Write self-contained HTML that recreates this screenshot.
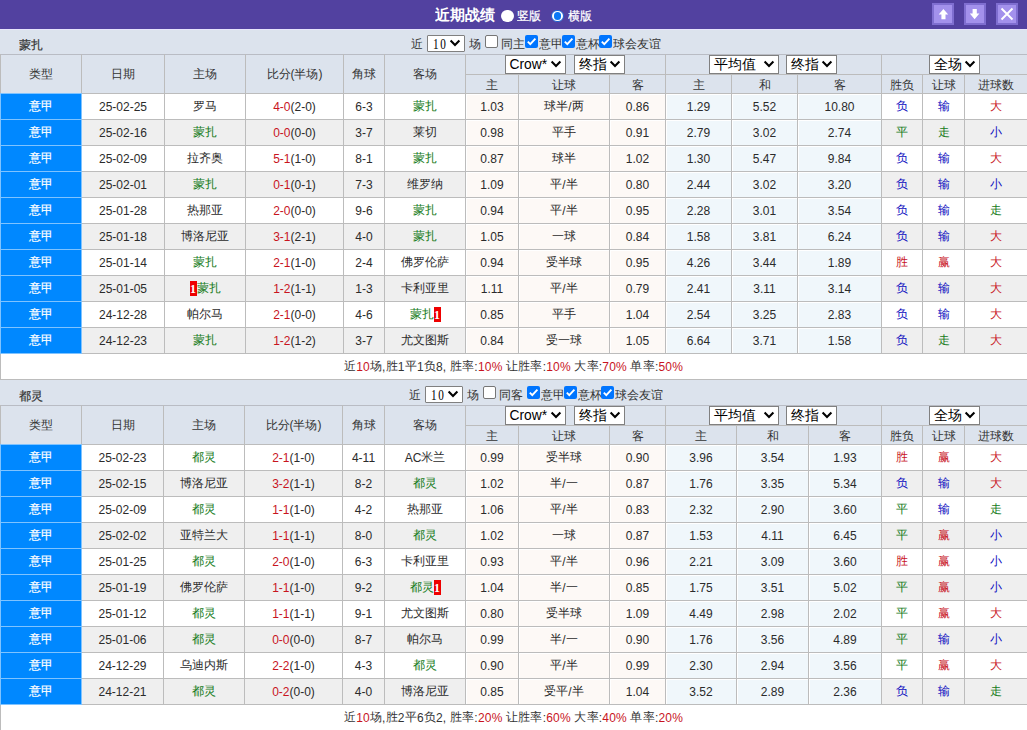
<!DOCTYPE html>
<html><head><meta charset="utf-8"><style>
html,body{margin:0;padding:0;background:#fff;width:1027px;height:730px;overflow:hidden;position:relative}
body{font-family:"Liberation Sans",sans-serif;font-size:12px;color:#333}
div{position:absolute;box-sizing:border-box}
.tx{white-space:nowrap;overflow:hidden}
.bd{display:inline-block;background:#e00;color:#fff;font-weight:bold;font-family:"Liberation Serif",serif;width:7px;height:15px;line-height:15px;text-align:center;vertical-align:middle;font-size:12px}
.sel{background:#fff;border:1px solid #808080;font-size:13.33px;color:#000;line-height:17px;white-space:nowrap}
.sel span{position:absolute;left:4px;top:0}
.n{position:relative;top:1px}
</style></head><body>
<div style="left:0px;top:0px;width:1027px;height:29px;background:#5241a0"></div>
<div style="left:0px;top:29px;width:1027px;height:1px;background:#e6e4fc"></div>
<div class="tx" style="left:435px;top:0px;width:70px;height:29px;line-height:29px;font-size:15px;font-weight:bold;color:#fff">近期战绩</div>
<div style="left:501px;top:9.5px;width:12.5px;height:12.5px;border-radius:50%;background:#fff"></div>
<div class="tx" style="left:517px;top:2px;width:30px;height:29px;line-height:29px;color:#fff;-webkit-text-stroke:0.25px #fff">竖版</div>
<div style="left:551px;top:9.5px;width:12.5px;height:12.5px;border-radius:50%;background:#fff;border:1px solid #1c5fd0"><div style="left:1.5px;top:1.5px;width:7.5px;height:7.5px;border-radius:50%;background:#0a78f5"></div></div>
<div class="tx" style="left:568px;top:2px;width:30px;height:29px;line-height:29px;color:#fff;-webkit-text-stroke:0.25px #fff">横版</div>
<div style="left:932px;top:3px;width:22px;height:22px;background:#a391ec;border:2px solid #7f6ed0"><svg width="22" height="22" viewBox="0 0 22 22" style="position:absolute;left:-2px;top:-2px"><path d="M11.4 5.9 L16.2 11.6 L13.5 11.6 L13.5 16.3 L9.4 16.3 L9.4 11.6 L6.7 11.6 Z" fill="#fff"/></svg></div>
<div style="left:964px;top:3px;width:22px;height:22px;background:#a391ec;border:2px solid #7f6ed0"><svg width="22" height="22" viewBox="0 0 22 22" style="position:absolute;left:-2px;top:-2px"><path d="M10.6 16.3 L15.4 10.5 L12.8 10.5 L12.8 5.9 L8.6 5.9 L8.6 10.5 L5.8 10.5 Z" fill="#fff"/></svg></div>
<div style="left:996px;top:3px;width:22px;height:22px;background:#a391ec;border:2px solid #7f6ed0"><svg width="22" height="22" viewBox="0 0 22 22" style="position:absolute;left:-2px;top:-2px"><path d="M5.5 5.5 L16.5 16.5 M16.5 5.5 L5.5 16.5" stroke="#fff" stroke-width="1.9"/></svg></div>
<div style="left:0px;top:30px;width:1027px;height:24px;background:#dce3ed"></div>
<div class="tx" style="left:19px;top:33px;width:40px;height:24px;line-height:24px;color:#333;-webkit-text-stroke:0.2px #333">蒙扎</div>
<div class="tx" style="left:411px;top:32px;width:14px;height:24px;line-height:24px;color:#333">近</div>
<div class="sel" style="left:427px;top:35px;width:38px;height:17px;font-family:&quot;Liberation Serif&quot;,serif;font-size:14px;line-height:15px;border-radius:1px"><span style="left:4.5px;top:1px;letter-spacing:2.2px;transform:scaleX(0.8);transform-origin:0 0">10</span><svg width="12" height="8" viewBox="0 0 12 8" style="position:absolute;left:21px;top:3px"><path d="M1.6 1.6 L6 6 L10.4 1.6" fill="none" stroke="#000" stroke-width="2.1"/></svg></div>
<div class="tx" style="left:469px;top:32px;width:14px;height:24px;line-height:24px;color:#333">场</div>
<div style="left:485px;top:35px;width:13px;height:13px;background:#fff;border:1px solid #767676;border-radius:2px"></div>
<div class="tx" style="left:501px;top:32px;width:30px;height:24px;line-height:24px;color:#333">同主</div>
<div style="left:525px;top:35px;width:13px;height:13px;background:#0075ff;border-radius:2px"><svg width="13" height="13" viewBox="0 0 13 13" style="position:absolute;left:0;top:0"><path d="M2.8 6.6 L5.3 9.1 L10.4 3.6" fill="none" stroke="#fff" stroke-width="1.9"/></svg></div>
<div class="tx" style="left:539px;top:32px;width:30px;height:24px;line-height:24px;color:#333">意甲</div>
<div style="left:562px;top:35px;width:13px;height:13px;background:#0075ff;border-radius:2px"><svg width="13" height="13" viewBox="0 0 13 13" style="position:absolute;left:0;top:0"><path d="M2.8 6.6 L5.3 9.1 L10.4 3.6" fill="none" stroke="#fff" stroke-width="1.9"/></svg></div>
<div class="tx" style="left:576px;top:32px;width:30px;height:24px;line-height:24px;color:#333">意杯</div>
<div style="left:599px;top:35px;width:13px;height:13px;background:#0075ff;border-radius:2px"><svg width="13" height="13" viewBox="0 0 13 13" style="position:absolute;left:0;top:0"><path d="M2.8 6.6 L5.3 9.1 L10.4 3.6" fill="none" stroke="#fff" stroke-width="1.9"/></svg></div>
<div class="tx" style="left:613px;top:32px;width:60px;height:24px;line-height:24px;color:#333">球会友谊</div>
<div style="left:0px;top:55px;width:1027px;height:38px;background:#dce3ed"></div>
<div style="left:0px;top:94px;width:1027px;height:25px;background:#ffffff"></div>
<div style="left:466px;top:94px;width:199px;height:25px;background:#fff"></div>
<div style="left:666px;top:94px;width:215px;height:25px;background:#fff"></div>
<div style="left:467px;top:95px;width:51px;height:24px;background:#fdf9f6"></div>
<div style="left:520px;top:95px;width:89px;height:24px;background:#fdf9f6"></div>
<div style="left:611px;top:95px;width:54px;height:24px;background:#fdf9f6"></div>
<div style="left:667px;top:95px;width:64px;height:24px;background:#f0f7fb"></div>
<div style="left:733px;top:95px;width:64px;height:24px;background:#f0f7fb"></div>
<div style="left:799px;top:95px;width:82px;height:24px;background:#f0f7fb"></div>
<div style="left:0px;top:93px;width:82px;height:27px;background:#0088ff;box-shadow:inset 0 0 0 1px #7fc3ff"></div>
<div style="left:0px;top:120px;width:1027px;height:25px;background:#efefef"></div>
<div style="left:466px;top:120px;width:199px;height:25px;background:#fff"></div>
<div style="left:666px;top:120px;width:215px;height:25px;background:#fff"></div>
<div style="left:467px;top:121px;width:51px;height:24px;background:#fdf9f6"></div>
<div style="left:520px;top:121px;width:89px;height:24px;background:#fdf9f6"></div>
<div style="left:611px;top:121px;width:54px;height:24px;background:#fdf9f6"></div>
<div style="left:667px;top:121px;width:64px;height:24px;background:#f0f7fb"></div>
<div style="left:733px;top:121px;width:64px;height:24px;background:#f0f7fb"></div>
<div style="left:799px;top:121px;width:82px;height:24px;background:#f0f7fb"></div>
<div style="left:0px;top:119px;width:82px;height:27px;background:#0088ff;box-shadow:inset 0 0 0 1px #7fc3ff"></div>
<div style="left:0px;top:146px;width:1027px;height:25px;background:#ffffff"></div>
<div style="left:466px;top:146px;width:199px;height:25px;background:#fff"></div>
<div style="left:666px;top:146px;width:215px;height:25px;background:#fff"></div>
<div style="left:467px;top:147px;width:51px;height:24px;background:#fdf9f6"></div>
<div style="left:520px;top:147px;width:89px;height:24px;background:#fdf9f6"></div>
<div style="left:611px;top:147px;width:54px;height:24px;background:#fdf9f6"></div>
<div style="left:667px;top:147px;width:64px;height:24px;background:#f0f7fb"></div>
<div style="left:733px;top:147px;width:64px;height:24px;background:#f0f7fb"></div>
<div style="left:799px;top:147px;width:82px;height:24px;background:#f0f7fb"></div>
<div style="left:0px;top:145px;width:82px;height:27px;background:#0088ff;box-shadow:inset 0 0 0 1px #7fc3ff"></div>
<div style="left:0px;top:172px;width:1027px;height:25px;background:#efefef"></div>
<div style="left:466px;top:172px;width:199px;height:25px;background:#fff"></div>
<div style="left:666px;top:172px;width:215px;height:25px;background:#fff"></div>
<div style="left:467px;top:173px;width:51px;height:24px;background:#fdf9f6"></div>
<div style="left:520px;top:173px;width:89px;height:24px;background:#fdf9f6"></div>
<div style="left:611px;top:173px;width:54px;height:24px;background:#fdf9f6"></div>
<div style="left:667px;top:173px;width:64px;height:24px;background:#f0f7fb"></div>
<div style="left:733px;top:173px;width:64px;height:24px;background:#f0f7fb"></div>
<div style="left:799px;top:173px;width:82px;height:24px;background:#f0f7fb"></div>
<div style="left:0px;top:171px;width:82px;height:27px;background:#0088ff;box-shadow:inset 0 0 0 1px #7fc3ff"></div>
<div style="left:0px;top:198px;width:1027px;height:25px;background:#ffffff"></div>
<div style="left:466px;top:198px;width:199px;height:25px;background:#fff"></div>
<div style="left:666px;top:198px;width:215px;height:25px;background:#fff"></div>
<div style="left:467px;top:199px;width:51px;height:24px;background:#fdf9f6"></div>
<div style="left:520px;top:199px;width:89px;height:24px;background:#fdf9f6"></div>
<div style="left:611px;top:199px;width:54px;height:24px;background:#fdf9f6"></div>
<div style="left:667px;top:199px;width:64px;height:24px;background:#f0f7fb"></div>
<div style="left:733px;top:199px;width:64px;height:24px;background:#f0f7fb"></div>
<div style="left:799px;top:199px;width:82px;height:24px;background:#f0f7fb"></div>
<div style="left:0px;top:197px;width:82px;height:27px;background:#0088ff;box-shadow:inset 0 0 0 1px #7fc3ff"></div>
<div style="left:0px;top:224px;width:1027px;height:25px;background:#efefef"></div>
<div style="left:466px;top:224px;width:199px;height:25px;background:#fff"></div>
<div style="left:666px;top:224px;width:215px;height:25px;background:#fff"></div>
<div style="left:467px;top:225px;width:51px;height:24px;background:#fdf9f6"></div>
<div style="left:520px;top:225px;width:89px;height:24px;background:#fdf9f6"></div>
<div style="left:611px;top:225px;width:54px;height:24px;background:#fdf9f6"></div>
<div style="left:667px;top:225px;width:64px;height:24px;background:#f0f7fb"></div>
<div style="left:733px;top:225px;width:64px;height:24px;background:#f0f7fb"></div>
<div style="left:799px;top:225px;width:82px;height:24px;background:#f0f7fb"></div>
<div style="left:0px;top:223px;width:82px;height:27px;background:#0088ff;box-shadow:inset 0 0 0 1px #7fc3ff"></div>
<div style="left:0px;top:250px;width:1027px;height:25px;background:#ffffff"></div>
<div style="left:466px;top:250px;width:199px;height:25px;background:#fff"></div>
<div style="left:666px;top:250px;width:215px;height:25px;background:#fff"></div>
<div style="left:467px;top:251px;width:51px;height:24px;background:#fdf9f6"></div>
<div style="left:520px;top:251px;width:89px;height:24px;background:#fdf9f6"></div>
<div style="left:611px;top:251px;width:54px;height:24px;background:#fdf9f6"></div>
<div style="left:667px;top:251px;width:64px;height:24px;background:#f0f7fb"></div>
<div style="left:733px;top:251px;width:64px;height:24px;background:#f0f7fb"></div>
<div style="left:799px;top:251px;width:82px;height:24px;background:#f0f7fb"></div>
<div style="left:0px;top:249px;width:82px;height:27px;background:#0088ff;box-shadow:inset 0 0 0 1px #7fc3ff"></div>
<div style="left:0px;top:276px;width:1027px;height:25px;background:#efefef"></div>
<div style="left:466px;top:276px;width:199px;height:25px;background:#fff"></div>
<div style="left:666px;top:276px;width:215px;height:25px;background:#fff"></div>
<div style="left:467px;top:277px;width:51px;height:24px;background:#fdf9f6"></div>
<div style="left:520px;top:277px;width:89px;height:24px;background:#fdf9f6"></div>
<div style="left:611px;top:277px;width:54px;height:24px;background:#fdf9f6"></div>
<div style="left:667px;top:277px;width:64px;height:24px;background:#f0f7fb"></div>
<div style="left:733px;top:277px;width:64px;height:24px;background:#f0f7fb"></div>
<div style="left:799px;top:277px;width:82px;height:24px;background:#f0f7fb"></div>
<div style="left:0px;top:275px;width:82px;height:27px;background:#0088ff;box-shadow:inset 0 0 0 1px #7fc3ff"></div>
<div style="left:0px;top:302px;width:1027px;height:25px;background:#ffffff"></div>
<div style="left:466px;top:302px;width:199px;height:25px;background:#fff"></div>
<div style="left:666px;top:302px;width:215px;height:25px;background:#fff"></div>
<div style="left:467px;top:303px;width:51px;height:24px;background:#fdf9f6"></div>
<div style="left:520px;top:303px;width:89px;height:24px;background:#fdf9f6"></div>
<div style="left:611px;top:303px;width:54px;height:24px;background:#fdf9f6"></div>
<div style="left:667px;top:303px;width:64px;height:24px;background:#f0f7fb"></div>
<div style="left:733px;top:303px;width:64px;height:24px;background:#f0f7fb"></div>
<div style="left:799px;top:303px;width:82px;height:24px;background:#f0f7fb"></div>
<div style="left:0px;top:301px;width:82px;height:27px;background:#0088ff;box-shadow:inset 0 0 0 1px #7fc3ff"></div>
<div style="left:0px;top:328px;width:1027px;height:25px;background:#efefef"></div>
<div style="left:466px;top:328px;width:199px;height:25px;background:#fff"></div>
<div style="left:666px;top:328px;width:215px;height:25px;background:#fff"></div>
<div style="left:467px;top:329px;width:51px;height:24px;background:#fdf9f6"></div>
<div style="left:520px;top:329px;width:89px;height:24px;background:#fdf9f6"></div>
<div style="left:611px;top:329px;width:54px;height:24px;background:#fdf9f6"></div>
<div style="left:667px;top:329px;width:64px;height:24px;background:#f0f7fb"></div>
<div style="left:733px;top:329px;width:64px;height:24px;background:#f0f7fb"></div>
<div style="left:799px;top:329px;width:82px;height:24px;background:#f0f7fb"></div>
<div style="left:0px;top:327px;width:82px;height:27px;background:#0088ff;box-shadow:inset 0 0 0 1px #7fc3ff"></div>
<div style="left:0px;top:354px;width:1027px;height:25px;background:#fff"></div>
<div style="left:0px;top:54px;width:1027px;height:1px;background:#b9bcc4"></div>
<div style="left:0px;top:93px;width:1027px;height:1px;background:#bcbcbc"></div>
<div style="left:465px;top:74px;width:562px;height:1px;background:#bcbcbc"></div>
<div style="left:82px;top:119px;width:945px;height:1px;background:#bcbcbc"></div>
<div style="left:82px;top:145px;width:945px;height:1px;background:#bcbcbc"></div>
<div style="left:82px;top:171px;width:945px;height:1px;background:#bcbcbc"></div>
<div style="left:82px;top:197px;width:945px;height:1px;background:#bcbcbc"></div>
<div style="left:82px;top:223px;width:945px;height:1px;background:#bcbcbc"></div>
<div style="left:82px;top:249px;width:945px;height:1px;background:#bcbcbc"></div>
<div style="left:82px;top:275px;width:945px;height:1px;background:#bcbcbc"></div>
<div style="left:82px;top:301px;width:945px;height:1px;background:#bcbcbc"></div>
<div style="left:82px;top:327px;width:945px;height:1px;background:#bcbcbc"></div>
<div style="left:82px;top:353px;width:945px;height:1px;background:#bcbcbc"></div>
<div style="left:0px;top:379px;width:1027px;height:1px;background:#bcbcbc"></div>
<div style="left:0px;top:54px;width:1px;height:326px;background:#bcbcbc"></div>
<div style="left:81px;top:54px;width:1px;height:300px;background:#bcbcbc"></div>
<div style="left:164px;top:54px;width:1px;height:300px;background:#bcbcbc"></div>
<div style="left:245px;top:54px;width:1px;height:300px;background:#bcbcbc"></div>
<div style="left:343px;top:54px;width:1px;height:300px;background:#bcbcbc"></div>
<div style="left:384px;top:54px;width:1px;height:300px;background:#bcbcbc"></div>
<div style="left:465px;top:54px;width:1px;height:300px;background:#bcbcbc"></div>
<div style="left:518px;top:74px;width:1px;height:280px;background:#bcbcbc"></div>
<div style="left:609px;top:74px;width:1px;height:280px;background:#bcbcbc"></div>
<div style="left:665px;top:54px;width:1px;height:300px;background:#bcbcbc"></div>
<div style="left:731px;top:74px;width:1px;height:280px;background:#bcbcbc"></div>
<div style="left:797px;top:74px;width:1px;height:280px;background:#bcbcbc"></div>
<div style="left:881px;top:54px;width:1px;height:300px;background:#bcbcbc"></div>
<div style="left:922px;top:74px;width:1px;height:280px;background:#bcbcbc"></div>
<div style="left:964px;top:74px;width:1px;height:280px;background:#bcbcbc"></div>
<div style="left:0px;top:93px;width:82px;height:27px;background:#0088ff;box-shadow:inset 0 0 0 1px #7fc3ff"></div>
<div style="left:0px;top:119px;width:82px;height:27px;background:#0088ff;box-shadow:inset 0 0 0 1px #7fc3ff"></div>
<div style="left:0px;top:145px;width:82px;height:27px;background:#0088ff;box-shadow:inset 0 0 0 1px #7fc3ff"></div>
<div style="left:0px;top:171px;width:82px;height:27px;background:#0088ff;box-shadow:inset 0 0 0 1px #7fc3ff"></div>
<div style="left:0px;top:197px;width:82px;height:27px;background:#0088ff;box-shadow:inset 0 0 0 1px #7fc3ff"></div>
<div style="left:0px;top:223px;width:82px;height:27px;background:#0088ff;box-shadow:inset 0 0 0 1px #7fc3ff"></div>
<div style="left:0px;top:249px;width:82px;height:27px;background:#0088ff;box-shadow:inset 0 0 0 1px #7fc3ff"></div>
<div style="left:0px;top:275px;width:82px;height:27px;background:#0088ff;box-shadow:inset 0 0 0 1px #7fc3ff"></div>
<div style="left:0px;top:301px;width:82px;height:27px;background:#0088ff;box-shadow:inset 0 0 0 1px #7fc3ff"></div>
<div style="left:0px;top:327px;width:82px;height:27px;background:#0088ff;box-shadow:inset 0 0 0 1px #7fc3ff"></div>
<div class="tx" style="left:1px;top:55px;width:80px;height:38px;line-height:38px;text-align:center;color:#333">类型</div>
<div class="tx" style="left:82px;top:55px;width:82px;height:38px;line-height:38px;text-align:center;color:#333">日期</div>
<div class="tx" style="left:165px;top:55px;width:80px;height:38px;line-height:38px;text-align:center;color:#333">主场</div>
<div class="tx" style="left:246px;top:55px;width:97px;height:38px;line-height:38px;text-align:center;color:#333">比分(半场)</div>
<div class="tx" style="left:344px;top:55px;width:40px;height:38px;line-height:38px;text-align:center;color:#333">角球</div>
<div class="tx" style="left:385px;top:55px;width:80px;height:38px;line-height:38px;text-align:center;color:#333">客场</div>
<div class="tx" style="left:466px;top:76px;width:52px;height:18px;line-height:18px;text-align:center;color:#333">主</div>
<div class="tx" style="left:519px;top:76px;width:90px;height:18px;line-height:18px;text-align:center;color:#333">让球</div>
<div class="tx" style="left:610px;top:76px;width:55px;height:18px;line-height:18px;text-align:center;color:#333">客</div>
<div class="tx" style="left:666px;top:76px;width:65px;height:18px;line-height:18px;text-align:center;color:#333">主</div>
<div class="tx" style="left:732px;top:76px;width:65px;height:18px;line-height:18px;text-align:center;color:#333">和</div>
<div class="tx" style="left:798px;top:76px;width:83px;height:18px;line-height:18px;text-align:center;color:#333">客</div>
<div class="tx" style="left:882px;top:76px;width:40px;height:18px;line-height:18px;text-align:center;color:#333">胜负</div>
<div class="tx" style="left:923px;top:76px;width:41px;height:18px;line-height:18px;text-align:center;color:#333">让球</div>
<div class="tx" style="left:965px;top:76px;width:62px;height:18px;line-height:18px;text-align:center;color:#333">进球数</div>
<div class="sel" style="left:505px;top:55px;width:61px;height:19px"><span style="font-size:13.8px;left:3.5px">Crow*</span><svg width="12" height="8" viewBox="0 0 12 8" style="position:absolute;left:44px;top:4px"><path d="M1.6 1.6 L6 6 L10.4 1.6" fill="none" stroke="#000" stroke-width="2.1"/></svg></div>
<div class="sel" style="left:574px;top:55px;width:51px;height:19px"><span style="font-size:14px;left:3.5px">终指</span><svg width="12" height="8" viewBox="0 0 12 8" style="position:absolute;left:34px;top:4px"><path d="M1.6 1.6 L6 6 L10.4 1.6" fill="none" stroke="#000" stroke-width="2.1"/></svg></div>
<div class="sel" style="left:709px;top:55px;width:70px;height:19px"><span style="font-size:14px;left:3.5px">平均值</span><svg width="12" height="8" viewBox="0 0 12 8" style="position:absolute;left:53px;top:4px"><path d="M1.6 1.6 L6 6 L10.4 1.6" fill="none" stroke="#000" stroke-width="2.1"/></svg></div>
<div class="sel" style="left:786px;top:55px;width:51px;height:19px"><span style="font-size:14px;left:3.5px">终指</span><svg width="12" height="8" viewBox="0 0 12 8" style="position:absolute;left:34px;top:4px"><path d="M1.6 1.6 L6 6 L10.4 1.6" fill="none" stroke="#000" stroke-width="2.1"/></svg></div>
<div class="sel" style="left:929px;top:55px;width:51px;height:19px"><span style="font-size:14px;left:3.5px">全场</span><svg width="12" height="8" viewBox="0 0 12 8" style="position:absolute;left:34px;top:4px"><path d="M1.6 1.6 L6 6 L10.4 1.6" fill="none" stroke="#000" stroke-width="2.1"/></svg></div>
<div class="tx" style="left:1px;top:94px;width:80px;height:25px;line-height:25px;text-align:center;color:#fff;-webkit-text-stroke:0.2px #fff">意甲</div>
<div class="tx" style="left:82px;top:94px;width:82px;height:25px;line-height:25px;text-align:center;color:#2b2b2b"><span class="n">25-02-25</span></div>
<div class="tx" style="left:165px;top:94px;width:80px;height:25px;line-height:25px;text-align:center;color:#2b2b2b">罗马</div>
<div class="tx" style="left:385px;top:94px;width:80px;height:25px;line-height:25px;text-align:center;color:#2b2b2b"><span style="color:#137a17">蒙扎</span></div>
<div class="tx" style="left:246px;top:94px;width:97px;height:25px;line-height:25px;text-align:center;color:#2b2b2b"><span style="color:#c8141e"><span class="n">4-0</span></span><span class="n">(2-0)</span></div>
<div class="tx" style="left:344px;top:94px;width:40px;height:25px;line-height:25px;text-align:center;color:#2b2b2b"><span class="n">6-3</span></div>
<div class="tx" style="left:466px;top:94px;width:52px;height:25px;line-height:25px;text-align:center;color:#2b2b2b"><span class="n">1.03</span></div>
<div class="tx" style="left:519px;top:94px;width:90px;height:25px;line-height:25px;text-align:center;color:#2b2b2b">球半<span class="n">/</span>两</div>
<div class="tx" style="left:610px;top:94px;width:55px;height:25px;line-height:25px;text-align:center;color:#2b2b2b"><span class="n">0.86</span></div>
<div class="tx" style="left:666px;top:94px;width:65px;height:25px;line-height:25px;text-align:center;color:#2b2b2b"><span class="n">1.29</span></div>
<div class="tx" style="left:732px;top:94px;width:65px;height:25px;line-height:25px;text-align:center;color:#2b2b2b"><span class="n">5.52</span></div>
<div class="tx" style="left:798px;top:94px;width:83px;height:25px;line-height:25px;text-align:center;color:#2b2b2b"><span class="n">10.80</span></div>
<div class="tx" style="left:882px;top:94px;width:40px;height:25px;line-height:25px;text-align:center;color:#0c0cc0">负</div>
<div class="tx" style="left:923px;top:94px;width:41px;height:25px;line-height:25px;text-align:center;color:#0c0cc0">输</div>
<div class="tx" style="left:965px;top:94px;width:62px;height:25px;line-height:25px;text-align:center;color:#c8141e">大</div>
<div class="tx" style="left:1px;top:120px;width:80px;height:25px;line-height:25px;text-align:center;color:#fff;-webkit-text-stroke:0.2px #fff">意甲</div>
<div class="tx" style="left:82px;top:120px;width:82px;height:25px;line-height:25px;text-align:center;color:#2b2b2b"><span class="n">25-02-16</span></div>
<div class="tx" style="left:165px;top:120px;width:80px;height:25px;line-height:25px;text-align:center;color:#2b2b2b"><span style="color:#137a17">蒙扎</span></div>
<div class="tx" style="left:385px;top:120px;width:80px;height:25px;line-height:25px;text-align:center;color:#2b2b2b">莱切</div>
<div class="tx" style="left:246px;top:120px;width:97px;height:25px;line-height:25px;text-align:center;color:#2b2b2b"><span style="color:#c8141e"><span class="n">0-0</span></span><span class="n">(0-0)</span></div>
<div class="tx" style="left:344px;top:120px;width:40px;height:25px;line-height:25px;text-align:center;color:#2b2b2b"><span class="n">3-7</span></div>
<div class="tx" style="left:466px;top:120px;width:52px;height:25px;line-height:25px;text-align:center;color:#2b2b2b"><span class="n">0.98</span></div>
<div class="tx" style="left:519px;top:120px;width:90px;height:25px;line-height:25px;text-align:center;color:#2b2b2b">平手</div>
<div class="tx" style="left:610px;top:120px;width:55px;height:25px;line-height:25px;text-align:center;color:#2b2b2b"><span class="n">0.91</span></div>
<div class="tx" style="left:666px;top:120px;width:65px;height:25px;line-height:25px;text-align:center;color:#2b2b2b"><span class="n">2.79</span></div>
<div class="tx" style="left:732px;top:120px;width:65px;height:25px;line-height:25px;text-align:center;color:#2b2b2b"><span class="n">3.02</span></div>
<div class="tx" style="left:798px;top:120px;width:83px;height:25px;line-height:25px;text-align:center;color:#2b2b2b"><span class="n">2.74</span></div>
<div class="tx" style="left:882px;top:120px;width:40px;height:25px;line-height:25px;text-align:center;color:#137a17">平</div>
<div class="tx" style="left:923px;top:120px;width:41px;height:25px;line-height:25px;text-align:center;color:#137a17">走</div>
<div class="tx" style="left:965px;top:120px;width:62px;height:25px;line-height:25px;text-align:center;color:#0c0cc0">小</div>
<div class="tx" style="left:1px;top:146px;width:80px;height:25px;line-height:25px;text-align:center;color:#fff;-webkit-text-stroke:0.2px #fff">意甲</div>
<div class="tx" style="left:82px;top:146px;width:82px;height:25px;line-height:25px;text-align:center;color:#2b2b2b"><span class="n">25-02-09</span></div>
<div class="tx" style="left:165px;top:146px;width:80px;height:25px;line-height:25px;text-align:center;color:#2b2b2b">拉齐奥</div>
<div class="tx" style="left:385px;top:146px;width:80px;height:25px;line-height:25px;text-align:center;color:#2b2b2b"><span style="color:#137a17">蒙扎</span></div>
<div class="tx" style="left:246px;top:146px;width:97px;height:25px;line-height:25px;text-align:center;color:#2b2b2b"><span style="color:#c8141e"><span class="n">5-1</span></span><span class="n">(1-0)</span></div>
<div class="tx" style="left:344px;top:146px;width:40px;height:25px;line-height:25px;text-align:center;color:#2b2b2b"><span class="n">8-1</span></div>
<div class="tx" style="left:466px;top:146px;width:52px;height:25px;line-height:25px;text-align:center;color:#2b2b2b"><span class="n">0.87</span></div>
<div class="tx" style="left:519px;top:146px;width:90px;height:25px;line-height:25px;text-align:center;color:#2b2b2b">球半</div>
<div class="tx" style="left:610px;top:146px;width:55px;height:25px;line-height:25px;text-align:center;color:#2b2b2b"><span class="n">1.02</span></div>
<div class="tx" style="left:666px;top:146px;width:65px;height:25px;line-height:25px;text-align:center;color:#2b2b2b"><span class="n">1.30</span></div>
<div class="tx" style="left:732px;top:146px;width:65px;height:25px;line-height:25px;text-align:center;color:#2b2b2b"><span class="n">5.47</span></div>
<div class="tx" style="left:798px;top:146px;width:83px;height:25px;line-height:25px;text-align:center;color:#2b2b2b"><span class="n">9.84</span></div>
<div class="tx" style="left:882px;top:146px;width:40px;height:25px;line-height:25px;text-align:center;color:#0c0cc0">负</div>
<div class="tx" style="left:923px;top:146px;width:41px;height:25px;line-height:25px;text-align:center;color:#0c0cc0">输</div>
<div class="tx" style="left:965px;top:146px;width:62px;height:25px;line-height:25px;text-align:center;color:#c8141e">大</div>
<div class="tx" style="left:1px;top:172px;width:80px;height:25px;line-height:25px;text-align:center;color:#fff;-webkit-text-stroke:0.2px #fff">意甲</div>
<div class="tx" style="left:82px;top:172px;width:82px;height:25px;line-height:25px;text-align:center;color:#2b2b2b"><span class="n">25-02-01</span></div>
<div class="tx" style="left:165px;top:172px;width:80px;height:25px;line-height:25px;text-align:center;color:#2b2b2b"><span style="color:#137a17">蒙扎</span></div>
<div class="tx" style="left:385px;top:172px;width:80px;height:25px;line-height:25px;text-align:center;color:#2b2b2b">维罗纳</div>
<div class="tx" style="left:246px;top:172px;width:97px;height:25px;line-height:25px;text-align:center;color:#2b2b2b"><span style="color:#c8141e"><span class="n">0-1</span></span><span class="n">(0-1)</span></div>
<div class="tx" style="left:344px;top:172px;width:40px;height:25px;line-height:25px;text-align:center;color:#2b2b2b"><span class="n">7-3</span></div>
<div class="tx" style="left:466px;top:172px;width:52px;height:25px;line-height:25px;text-align:center;color:#2b2b2b"><span class="n">1.09</span></div>
<div class="tx" style="left:519px;top:172px;width:90px;height:25px;line-height:25px;text-align:center;color:#2b2b2b">平<span class="n">/</span>半</div>
<div class="tx" style="left:610px;top:172px;width:55px;height:25px;line-height:25px;text-align:center;color:#2b2b2b"><span class="n">0.80</span></div>
<div class="tx" style="left:666px;top:172px;width:65px;height:25px;line-height:25px;text-align:center;color:#2b2b2b"><span class="n">2.44</span></div>
<div class="tx" style="left:732px;top:172px;width:65px;height:25px;line-height:25px;text-align:center;color:#2b2b2b"><span class="n">3.02</span></div>
<div class="tx" style="left:798px;top:172px;width:83px;height:25px;line-height:25px;text-align:center;color:#2b2b2b"><span class="n">3.20</span></div>
<div class="tx" style="left:882px;top:172px;width:40px;height:25px;line-height:25px;text-align:center;color:#0c0cc0">负</div>
<div class="tx" style="left:923px;top:172px;width:41px;height:25px;line-height:25px;text-align:center;color:#0c0cc0">输</div>
<div class="tx" style="left:965px;top:172px;width:62px;height:25px;line-height:25px;text-align:center;color:#0c0cc0">小</div>
<div class="tx" style="left:1px;top:198px;width:80px;height:25px;line-height:25px;text-align:center;color:#fff;-webkit-text-stroke:0.2px #fff">意甲</div>
<div class="tx" style="left:82px;top:198px;width:82px;height:25px;line-height:25px;text-align:center;color:#2b2b2b"><span class="n">25-01-28</span></div>
<div class="tx" style="left:165px;top:198px;width:80px;height:25px;line-height:25px;text-align:center;color:#2b2b2b">热那亚</div>
<div class="tx" style="left:385px;top:198px;width:80px;height:25px;line-height:25px;text-align:center;color:#2b2b2b"><span style="color:#137a17">蒙扎</span></div>
<div class="tx" style="left:246px;top:198px;width:97px;height:25px;line-height:25px;text-align:center;color:#2b2b2b"><span style="color:#c8141e"><span class="n">2-0</span></span><span class="n">(0-0)</span></div>
<div class="tx" style="left:344px;top:198px;width:40px;height:25px;line-height:25px;text-align:center;color:#2b2b2b"><span class="n">9-6</span></div>
<div class="tx" style="left:466px;top:198px;width:52px;height:25px;line-height:25px;text-align:center;color:#2b2b2b"><span class="n">0.94</span></div>
<div class="tx" style="left:519px;top:198px;width:90px;height:25px;line-height:25px;text-align:center;color:#2b2b2b">平<span class="n">/</span>半</div>
<div class="tx" style="left:610px;top:198px;width:55px;height:25px;line-height:25px;text-align:center;color:#2b2b2b"><span class="n">0.95</span></div>
<div class="tx" style="left:666px;top:198px;width:65px;height:25px;line-height:25px;text-align:center;color:#2b2b2b"><span class="n">2.28</span></div>
<div class="tx" style="left:732px;top:198px;width:65px;height:25px;line-height:25px;text-align:center;color:#2b2b2b"><span class="n">3.01</span></div>
<div class="tx" style="left:798px;top:198px;width:83px;height:25px;line-height:25px;text-align:center;color:#2b2b2b"><span class="n">3.54</span></div>
<div class="tx" style="left:882px;top:198px;width:40px;height:25px;line-height:25px;text-align:center;color:#0c0cc0">负</div>
<div class="tx" style="left:923px;top:198px;width:41px;height:25px;line-height:25px;text-align:center;color:#0c0cc0">输</div>
<div class="tx" style="left:965px;top:198px;width:62px;height:25px;line-height:25px;text-align:center;color:#137a17">走</div>
<div class="tx" style="left:1px;top:224px;width:80px;height:25px;line-height:25px;text-align:center;color:#fff;-webkit-text-stroke:0.2px #fff">意甲</div>
<div class="tx" style="left:82px;top:224px;width:82px;height:25px;line-height:25px;text-align:center;color:#2b2b2b"><span class="n">25-01-18</span></div>
<div class="tx" style="left:165px;top:224px;width:80px;height:25px;line-height:25px;text-align:center;color:#2b2b2b">博洛尼亚</div>
<div class="tx" style="left:385px;top:224px;width:80px;height:25px;line-height:25px;text-align:center;color:#2b2b2b"><span style="color:#137a17">蒙扎</span></div>
<div class="tx" style="left:246px;top:224px;width:97px;height:25px;line-height:25px;text-align:center;color:#2b2b2b"><span style="color:#c8141e"><span class="n">3-1</span></span><span class="n">(2-1)</span></div>
<div class="tx" style="left:344px;top:224px;width:40px;height:25px;line-height:25px;text-align:center;color:#2b2b2b"><span class="n">4-0</span></div>
<div class="tx" style="left:466px;top:224px;width:52px;height:25px;line-height:25px;text-align:center;color:#2b2b2b"><span class="n">1.05</span></div>
<div class="tx" style="left:519px;top:224px;width:90px;height:25px;line-height:25px;text-align:center;color:#2b2b2b">一球</div>
<div class="tx" style="left:610px;top:224px;width:55px;height:25px;line-height:25px;text-align:center;color:#2b2b2b"><span class="n">0.84</span></div>
<div class="tx" style="left:666px;top:224px;width:65px;height:25px;line-height:25px;text-align:center;color:#2b2b2b"><span class="n">1.58</span></div>
<div class="tx" style="left:732px;top:224px;width:65px;height:25px;line-height:25px;text-align:center;color:#2b2b2b"><span class="n">3.81</span></div>
<div class="tx" style="left:798px;top:224px;width:83px;height:25px;line-height:25px;text-align:center;color:#2b2b2b"><span class="n">6.24</span></div>
<div class="tx" style="left:882px;top:224px;width:40px;height:25px;line-height:25px;text-align:center;color:#0c0cc0">负</div>
<div class="tx" style="left:923px;top:224px;width:41px;height:25px;line-height:25px;text-align:center;color:#0c0cc0">输</div>
<div class="tx" style="left:965px;top:224px;width:62px;height:25px;line-height:25px;text-align:center;color:#c8141e">大</div>
<div class="tx" style="left:1px;top:250px;width:80px;height:25px;line-height:25px;text-align:center;color:#fff;-webkit-text-stroke:0.2px #fff">意甲</div>
<div class="tx" style="left:82px;top:250px;width:82px;height:25px;line-height:25px;text-align:center;color:#2b2b2b"><span class="n">25-01-14</span></div>
<div class="tx" style="left:165px;top:250px;width:80px;height:25px;line-height:25px;text-align:center;color:#2b2b2b"><span style="color:#137a17">蒙扎</span></div>
<div class="tx" style="left:385px;top:250px;width:80px;height:25px;line-height:25px;text-align:center;color:#2b2b2b">佛罗伦萨</div>
<div class="tx" style="left:246px;top:250px;width:97px;height:25px;line-height:25px;text-align:center;color:#2b2b2b"><span style="color:#c8141e"><span class="n">2-1</span></span><span class="n">(1-0)</span></div>
<div class="tx" style="left:344px;top:250px;width:40px;height:25px;line-height:25px;text-align:center;color:#2b2b2b"><span class="n">2-4</span></div>
<div class="tx" style="left:466px;top:250px;width:52px;height:25px;line-height:25px;text-align:center;color:#2b2b2b"><span class="n">0.94</span></div>
<div class="tx" style="left:519px;top:250px;width:90px;height:25px;line-height:25px;text-align:center;color:#2b2b2b">受半球</div>
<div class="tx" style="left:610px;top:250px;width:55px;height:25px;line-height:25px;text-align:center;color:#2b2b2b"><span class="n">0.95</span></div>
<div class="tx" style="left:666px;top:250px;width:65px;height:25px;line-height:25px;text-align:center;color:#2b2b2b"><span class="n">4.26</span></div>
<div class="tx" style="left:732px;top:250px;width:65px;height:25px;line-height:25px;text-align:center;color:#2b2b2b"><span class="n">3.44</span></div>
<div class="tx" style="left:798px;top:250px;width:83px;height:25px;line-height:25px;text-align:center;color:#2b2b2b"><span class="n">1.89</span></div>
<div class="tx" style="left:882px;top:250px;width:40px;height:25px;line-height:25px;text-align:center;color:#c8141e">胜</div>
<div class="tx" style="left:923px;top:250px;width:41px;height:25px;line-height:25px;text-align:center;color:#c8141e">赢</div>
<div class="tx" style="left:965px;top:250px;width:62px;height:25px;line-height:25px;text-align:center;color:#c8141e">大</div>
<div class="tx" style="left:1px;top:276px;width:80px;height:25px;line-height:25px;text-align:center;color:#fff;-webkit-text-stroke:0.2px #fff">意甲</div>
<div class="tx" style="left:82px;top:276px;width:82px;height:25px;line-height:25px;text-align:center;color:#2b2b2b"><span class="n">25-01-05</span></div>
<div class="tx" style="left:165px;top:276px;width:80px;height:25px;line-height:25px;text-align:center;color:#2b2b2b"><span class="bd"><span class="n">1</span></span><span style="color:#137a17">蒙扎</span></div>
<div class="tx" style="left:385px;top:276px;width:80px;height:25px;line-height:25px;text-align:center;color:#2b2b2b">卡利亚里</div>
<div class="tx" style="left:246px;top:276px;width:97px;height:25px;line-height:25px;text-align:center;color:#2b2b2b"><span style="color:#c8141e"><span class="n">1-2</span></span><span class="n">(1-1)</span></div>
<div class="tx" style="left:344px;top:276px;width:40px;height:25px;line-height:25px;text-align:center;color:#2b2b2b"><span class="n">1-3</span></div>
<div class="tx" style="left:466px;top:276px;width:52px;height:25px;line-height:25px;text-align:center;color:#2b2b2b"><span class="n">1.11</span></div>
<div class="tx" style="left:519px;top:276px;width:90px;height:25px;line-height:25px;text-align:center;color:#2b2b2b">平<span class="n">/</span>半</div>
<div class="tx" style="left:610px;top:276px;width:55px;height:25px;line-height:25px;text-align:center;color:#2b2b2b"><span class="n">0.79</span></div>
<div class="tx" style="left:666px;top:276px;width:65px;height:25px;line-height:25px;text-align:center;color:#2b2b2b"><span class="n">2.41</span></div>
<div class="tx" style="left:732px;top:276px;width:65px;height:25px;line-height:25px;text-align:center;color:#2b2b2b"><span class="n">3.11</span></div>
<div class="tx" style="left:798px;top:276px;width:83px;height:25px;line-height:25px;text-align:center;color:#2b2b2b"><span class="n">3.14</span></div>
<div class="tx" style="left:882px;top:276px;width:40px;height:25px;line-height:25px;text-align:center;color:#0c0cc0">负</div>
<div class="tx" style="left:923px;top:276px;width:41px;height:25px;line-height:25px;text-align:center;color:#0c0cc0">输</div>
<div class="tx" style="left:965px;top:276px;width:62px;height:25px;line-height:25px;text-align:center;color:#c8141e">大</div>
<div class="tx" style="left:1px;top:302px;width:80px;height:25px;line-height:25px;text-align:center;color:#fff;-webkit-text-stroke:0.2px #fff">意甲</div>
<div class="tx" style="left:82px;top:302px;width:82px;height:25px;line-height:25px;text-align:center;color:#2b2b2b"><span class="n">24-12-28</span></div>
<div class="tx" style="left:165px;top:302px;width:80px;height:25px;line-height:25px;text-align:center;color:#2b2b2b">帕尔马</div>
<div class="tx" style="left:385px;top:302px;width:80px;height:25px;line-height:25px;text-align:center;color:#2b2b2b"><span style="color:#137a17">蒙扎</span><span class="bd"><span class="n">1</span></span></div>
<div class="tx" style="left:246px;top:302px;width:97px;height:25px;line-height:25px;text-align:center;color:#2b2b2b"><span style="color:#c8141e"><span class="n">2-1</span></span><span class="n">(0-0)</span></div>
<div class="tx" style="left:344px;top:302px;width:40px;height:25px;line-height:25px;text-align:center;color:#2b2b2b"><span class="n">4-6</span></div>
<div class="tx" style="left:466px;top:302px;width:52px;height:25px;line-height:25px;text-align:center;color:#2b2b2b"><span class="n">0.85</span></div>
<div class="tx" style="left:519px;top:302px;width:90px;height:25px;line-height:25px;text-align:center;color:#2b2b2b">平手</div>
<div class="tx" style="left:610px;top:302px;width:55px;height:25px;line-height:25px;text-align:center;color:#2b2b2b"><span class="n">1.04</span></div>
<div class="tx" style="left:666px;top:302px;width:65px;height:25px;line-height:25px;text-align:center;color:#2b2b2b"><span class="n">2.54</span></div>
<div class="tx" style="left:732px;top:302px;width:65px;height:25px;line-height:25px;text-align:center;color:#2b2b2b"><span class="n">3.25</span></div>
<div class="tx" style="left:798px;top:302px;width:83px;height:25px;line-height:25px;text-align:center;color:#2b2b2b"><span class="n">2.83</span></div>
<div class="tx" style="left:882px;top:302px;width:40px;height:25px;line-height:25px;text-align:center;color:#0c0cc0">负</div>
<div class="tx" style="left:923px;top:302px;width:41px;height:25px;line-height:25px;text-align:center;color:#0c0cc0">输</div>
<div class="tx" style="left:965px;top:302px;width:62px;height:25px;line-height:25px;text-align:center;color:#c8141e">大</div>
<div class="tx" style="left:1px;top:328px;width:80px;height:25px;line-height:25px;text-align:center;color:#fff;-webkit-text-stroke:0.2px #fff">意甲</div>
<div class="tx" style="left:82px;top:328px;width:82px;height:25px;line-height:25px;text-align:center;color:#2b2b2b"><span class="n">24-12-23</span></div>
<div class="tx" style="left:165px;top:328px;width:80px;height:25px;line-height:25px;text-align:center;color:#2b2b2b"><span style="color:#137a17">蒙扎</span></div>
<div class="tx" style="left:385px;top:328px;width:80px;height:25px;line-height:25px;text-align:center;color:#2b2b2b">尤文图斯</div>
<div class="tx" style="left:246px;top:328px;width:97px;height:25px;line-height:25px;text-align:center;color:#2b2b2b"><span style="color:#c8141e"><span class="n">1-2</span></span><span class="n">(1-2)</span></div>
<div class="tx" style="left:344px;top:328px;width:40px;height:25px;line-height:25px;text-align:center;color:#2b2b2b"><span class="n">3-7</span></div>
<div class="tx" style="left:466px;top:328px;width:52px;height:25px;line-height:25px;text-align:center;color:#2b2b2b"><span class="n">0.84</span></div>
<div class="tx" style="left:519px;top:328px;width:90px;height:25px;line-height:25px;text-align:center;color:#2b2b2b">受一球</div>
<div class="tx" style="left:610px;top:328px;width:55px;height:25px;line-height:25px;text-align:center;color:#2b2b2b"><span class="n">1.05</span></div>
<div class="tx" style="left:666px;top:328px;width:65px;height:25px;line-height:25px;text-align:center;color:#2b2b2b"><span class="n">6.64</span></div>
<div class="tx" style="left:732px;top:328px;width:65px;height:25px;line-height:25px;text-align:center;color:#2b2b2b"><span class="n">3.71</span></div>
<div class="tx" style="left:798px;top:328px;width:83px;height:25px;line-height:25px;text-align:center;color:#2b2b2b"><span class="n">1.58</span></div>
<div class="tx" style="left:882px;top:328px;width:40px;height:25px;line-height:25px;text-align:center;color:#0c0cc0">负</div>
<div class="tx" style="left:923px;top:328px;width:41px;height:25px;line-height:25px;text-align:center;color:#137a17">走</div>
<div class="tx" style="left:965px;top:328px;width:62px;height:25px;line-height:25px;text-align:center;color:#c8141e">大</div>
<div class="tx" style="left:0px;top:354px;width:1027px;height:25px;line-height:25px;text-align:center;color:#333;letter-spacing:0.2px">近<span style="color:#c8141e"><span class="n">10</span></span>场<span class="n">,</span>胜<span class="n">1</span>平<span class="n">1</span>负<span class="n">8,</span> 胜率<span class="n">:</span><span style="color:#c8141e"><span class="n">10%</span></span> 让胜率<span class="n">:</span><span style="color:#c8141e"><span class="n">10%</span></span> 大率<span class="n">:</span><span style="color:#c8141e"><span class="n">70%</span></span> 单率<span class="n">:</span><span style="color:#c8141e"><span class="n">50%</span></span></div>
<div style="left:0px;top:380px;width:1027px;height:25px;background:#dce3ed"></div>
<div class="tx" style="left:19px;top:384px;width:40px;height:24px;line-height:24px;color:#333;-webkit-text-stroke:0.2px #333">都灵</div>
<div class="tx" style="left:409px;top:383px;width:14px;height:24px;line-height:24px;color:#333">近</div>
<div class="sel" style="left:425px;top:386px;width:38px;height:17px;font-family:&quot;Liberation Serif&quot;,serif;font-size:14px;line-height:15px;border-radius:1px"><span style="left:4.5px;top:1px;letter-spacing:2.2px;transform:scaleX(0.8);transform-origin:0 0">10</span><svg width="12" height="8" viewBox="0 0 12 8" style="position:absolute;left:21px;top:3px"><path d="M1.6 1.6 L6 6 L10.4 1.6" fill="none" stroke="#000" stroke-width="2.1"/></svg></div>
<div class="tx" style="left:467px;top:383px;width:14px;height:24px;line-height:24px;color:#333">场</div>
<div style="left:483px;top:386px;width:13px;height:13px;background:#fff;border:1px solid #767676;border-radius:2px"></div>
<div class="tx" style="left:499px;top:383px;width:30px;height:24px;line-height:24px;color:#333">同客</div>
<div style="left:527px;top:386px;width:13px;height:13px;background:#0075ff;border-radius:2px"><svg width="13" height="13" viewBox="0 0 13 13" style="position:absolute;left:0;top:0"><path d="M2.8 6.6 L5.3 9.1 L10.4 3.6" fill="none" stroke="#fff" stroke-width="1.9"/></svg></div>
<div class="tx" style="left:541px;top:383px;width:30px;height:24px;line-height:24px;color:#333">意甲</div>
<div style="left:564px;top:386px;width:13px;height:13px;background:#0075ff;border-radius:2px"><svg width="13" height="13" viewBox="0 0 13 13" style="position:absolute;left:0;top:0"><path d="M2.8 6.6 L5.3 9.1 L10.4 3.6" fill="none" stroke="#fff" stroke-width="1.9"/></svg></div>
<div class="tx" style="left:578px;top:383px;width:30px;height:24px;line-height:24px;color:#333">意杯</div>
<div style="left:601px;top:386px;width:13px;height:13px;background:#0075ff;border-radius:2px"><svg width="13" height="13" viewBox="0 0 13 13" style="position:absolute;left:0;top:0"><path d="M2.8 6.6 L5.3 9.1 L10.4 3.6" fill="none" stroke="#fff" stroke-width="1.9"/></svg></div>
<div class="tx" style="left:615px;top:383px;width:60px;height:24px;line-height:24px;color:#333">球会友谊</div>
<div style="left:0px;top:406px;width:1027px;height:38px;background:#dce3ed"></div>
<div style="left:0px;top:445px;width:1027px;height:25px;background:#ffffff"></div>
<div style="left:466px;top:445px;width:199px;height:25px;background:#fff"></div>
<div style="left:666px;top:445px;width:215px;height:25px;background:#fff"></div>
<div style="left:467px;top:446px;width:51px;height:24px;background:#fdf9f6"></div>
<div style="left:520px;top:446px;width:89px;height:24px;background:#fdf9f6"></div>
<div style="left:611px;top:446px;width:54px;height:24px;background:#fdf9f6"></div>
<div style="left:667px;top:446px;width:69px;height:24px;background:#f0f7fb"></div>
<div style="left:738px;top:446px;width:70px;height:24px;background:#f0f7fb"></div>
<div style="left:810px;top:446px;width:71px;height:24px;background:#f0f7fb"></div>
<div style="left:0px;top:444px;width:82px;height:27px;background:#0088ff;box-shadow:inset 0 0 0 1px #7fc3ff"></div>
<div style="left:0px;top:471px;width:1027px;height:25px;background:#efefef"></div>
<div style="left:466px;top:471px;width:199px;height:25px;background:#fff"></div>
<div style="left:666px;top:471px;width:215px;height:25px;background:#fff"></div>
<div style="left:467px;top:472px;width:51px;height:24px;background:#fdf9f6"></div>
<div style="left:520px;top:472px;width:89px;height:24px;background:#fdf9f6"></div>
<div style="left:611px;top:472px;width:54px;height:24px;background:#fdf9f6"></div>
<div style="left:667px;top:472px;width:69px;height:24px;background:#f0f7fb"></div>
<div style="left:738px;top:472px;width:70px;height:24px;background:#f0f7fb"></div>
<div style="left:810px;top:472px;width:71px;height:24px;background:#f0f7fb"></div>
<div style="left:0px;top:470px;width:82px;height:27px;background:#0088ff;box-shadow:inset 0 0 0 1px #7fc3ff"></div>
<div style="left:0px;top:497px;width:1027px;height:25px;background:#ffffff"></div>
<div style="left:466px;top:497px;width:199px;height:25px;background:#fff"></div>
<div style="left:666px;top:497px;width:215px;height:25px;background:#fff"></div>
<div style="left:467px;top:498px;width:51px;height:24px;background:#fdf9f6"></div>
<div style="left:520px;top:498px;width:89px;height:24px;background:#fdf9f6"></div>
<div style="left:611px;top:498px;width:54px;height:24px;background:#fdf9f6"></div>
<div style="left:667px;top:498px;width:69px;height:24px;background:#f0f7fb"></div>
<div style="left:738px;top:498px;width:70px;height:24px;background:#f0f7fb"></div>
<div style="left:810px;top:498px;width:71px;height:24px;background:#f0f7fb"></div>
<div style="left:0px;top:496px;width:82px;height:27px;background:#0088ff;box-shadow:inset 0 0 0 1px #7fc3ff"></div>
<div style="left:0px;top:523px;width:1027px;height:25px;background:#efefef"></div>
<div style="left:466px;top:523px;width:199px;height:25px;background:#fff"></div>
<div style="left:666px;top:523px;width:215px;height:25px;background:#fff"></div>
<div style="left:467px;top:524px;width:51px;height:24px;background:#fdf9f6"></div>
<div style="left:520px;top:524px;width:89px;height:24px;background:#fdf9f6"></div>
<div style="left:611px;top:524px;width:54px;height:24px;background:#fdf9f6"></div>
<div style="left:667px;top:524px;width:69px;height:24px;background:#f0f7fb"></div>
<div style="left:738px;top:524px;width:70px;height:24px;background:#f0f7fb"></div>
<div style="left:810px;top:524px;width:71px;height:24px;background:#f0f7fb"></div>
<div style="left:0px;top:522px;width:82px;height:27px;background:#0088ff;box-shadow:inset 0 0 0 1px #7fc3ff"></div>
<div style="left:0px;top:549px;width:1027px;height:25px;background:#ffffff"></div>
<div style="left:466px;top:549px;width:199px;height:25px;background:#fff"></div>
<div style="left:666px;top:549px;width:215px;height:25px;background:#fff"></div>
<div style="left:467px;top:550px;width:51px;height:24px;background:#fdf9f6"></div>
<div style="left:520px;top:550px;width:89px;height:24px;background:#fdf9f6"></div>
<div style="left:611px;top:550px;width:54px;height:24px;background:#fdf9f6"></div>
<div style="left:667px;top:550px;width:69px;height:24px;background:#f0f7fb"></div>
<div style="left:738px;top:550px;width:70px;height:24px;background:#f0f7fb"></div>
<div style="left:810px;top:550px;width:71px;height:24px;background:#f0f7fb"></div>
<div style="left:0px;top:548px;width:82px;height:27px;background:#0088ff;box-shadow:inset 0 0 0 1px #7fc3ff"></div>
<div style="left:0px;top:575px;width:1027px;height:25px;background:#efefef"></div>
<div style="left:466px;top:575px;width:199px;height:25px;background:#fff"></div>
<div style="left:666px;top:575px;width:215px;height:25px;background:#fff"></div>
<div style="left:467px;top:576px;width:51px;height:24px;background:#fdf9f6"></div>
<div style="left:520px;top:576px;width:89px;height:24px;background:#fdf9f6"></div>
<div style="left:611px;top:576px;width:54px;height:24px;background:#fdf9f6"></div>
<div style="left:667px;top:576px;width:69px;height:24px;background:#f0f7fb"></div>
<div style="left:738px;top:576px;width:70px;height:24px;background:#f0f7fb"></div>
<div style="left:810px;top:576px;width:71px;height:24px;background:#f0f7fb"></div>
<div style="left:0px;top:574px;width:82px;height:27px;background:#0088ff;box-shadow:inset 0 0 0 1px #7fc3ff"></div>
<div style="left:0px;top:601px;width:1027px;height:25px;background:#ffffff"></div>
<div style="left:466px;top:601px;width:199px;height:25px;background:#fff"></div>
<div style="left:666px;top:601px;width:215px;height:25px;background:#fff"></div>
<div style="left:467px;top:602px;width:51px;height:24px;background:#fdf9f6"></div>
<div style="left:520px;top:602px;width:89px;height:24px;background:#fdf9f6"></div>
<div style="left:611px;top:602px;width:54px;height:24px;background:#fdf9f6"></div>
<div style="left:667px;top:602px;width:69px;height:24px;background:#f0f7fb"></div>
<div style="left:738px;top:602px;width:70px;height:24px;background:#f0f7fb"></div>
<div style="left:810px;top:602px;width:71px;height:24px;background:#f0f7fb"></div>
<div style="left:0px;top:600px;width:82px;height:27px;background:#0088ff;box-shadow:inset 0 0 0 1px #7fc3ff"></div>
<div style="left:0px;top:627px;width:1027px;height:25px;background:#efefef"></div>
<div style="left:466px;top:627px;width:199px;height:25px;background:#fff"></div>
<div style="left:666px;top:627px;width:215px;height:25px;background:#fff"></div>
<div style="left:467px;top:628px;width:51px;height:24px;background:#fdf9f6"></div>
<div style="left:520px;top:628px;width:89px;height:24px;background:#fdf9f6"></div>
<div style="left:611px;top:628px;width:54px;height:24px;background:#fdf9f6"></div>
<div style="left:667px;top:628px;width:69px;height:24px;background:#f0f7fb"></div>
<div style="left:738px;top:628px;width:70px;height:24px;background:#f0f7fb"></div>
<div style="left:810px;top:628px;width:71px;height:24px;background:#f0f7fb"></div>
<div style="left:0px;top:626px;width:82px;height:27px;background:#0088ff;box-shadow:inset 0 0 0 1px #7fc3ff"></div>
<div style="left:0px;top:653px;width:1027px;height:25px;background:#ffffff"></div>
<div style="left:466px;top:653px;width:199px;height:25px;background:#fff"></div>
<div style="left:666px;top:653px;width:215px;height:25px;background:#fff"></div>
<div style="left:467px;top:654px;width:51px;height:24px;background:#fdf9f6"></div>
<div style="left:520px;top:654px;width:89px;height:24px;background:#fdf9f6"></div>
<div style="left:611px;top:654px;width:54px;height:24px;background:#fdf9f6"></div>
<div style="left:667px;top:654px;width:69px;height:24px;background:#f0f7fb"></div>
<div style="left:738px;top:654px;width:70px;height:24px;background:#f0f7fb"></div>
<div style="left:810px;top:654px;width:71px;height:24px;background:#f0f7fb"></div>
<div style="left:0px;top:652px;width:82px;height:27px;background:#0088ff;box-shadow:inset 0 0 0 1px #7fc3ff"></div>
<div style="left:0px;top:679px;width:1027px;height:25px;background:#efefef"></div>
<div style="left:466px;top:679px;width:199px;height:25px;background:#fff"></div>
<div style="left:666px;top:679px;width:215px;height:25px;background:#fff"></div>
<div style="left:467px;top:680px;width:51px;height:24px;background:#fdf9f6"></div>
<div style="left:520px;top:680px;width:89px;height:24px;background:#fdf9f6"></div>
<div style="left:611px;top:680px;width:54px;height:24px;background:#fdf9f6"></div>
<div style="left:667px;top:680px;width:69px;height:24px;background:#f0f7fb"></div>
<div style="left:738px;top:680px;width:70px;height:24px;background:#f0f7fb"></div>
<div style="left:810px;top:680px;width:71px;height:24px;background:#f0f7fb"></div>
<div style="left:0px;top:678px;width:82px;height:27px;background:#0088ff;box-shadow:inset 0 0 0 1px #7fc3ff"></div>
<div style="left:0px;top:705px;width:1027px;height:25px;background:#fff"></div>
<div style="left:0px;top:405px;width:1027px;height:1px;background:#b9bcc4"></div>
<div style="left:0px;top:444px;width:1027px;height:1px;background:#bcbcbc"></div>
<div style="left:465px;top:425px;width:562px;height:1px;background:#bcbcbc"></div>
<div style="left:82px;top:470px;width:945px;height:1px;background:#bcbcbc"></div>
<div style="left:82px;top:496px;width:945px;height:1px;background:#bcbcbc"></div>
<div style="left:82px;top:522px;width:945px;height:1px;background:#bcbcbc"></div>
<div style="left:82px;top:548px;width:945px;height:1px;background:#bcbcbc"></div>
<div style="left:82px;top:574px;width:945px;height:1px;background:#bcbcbc"></div>
<div style="left:82px;top:600px;width:945px;height:1px;background:#bcbcbc"></div>
<div style="left:82px;top:626px;width:945px;height:1px;background:#bcbcbc"></div>
<div style="left:82px;top:652px;width:945px;height:1px;background:#bcbcbc"></div>
<div style="left:82px;top:678px;width:945px;height:1px;background:#bcbcbc"></div>
<div style="left:82px;top:704px;width:945px;height:1px;background:#bcbcbc"></div>
<div style="left:0px;top:730px;width:1027px;height:1px;background:#bcbcbc"></div>
<div style="left:0px;top:405px;width:1px;height:326px;background:#bcbcbc"></div>
<div style="left:81px;top:405px;width:1px;height:300px;background:#bcbcbc"></div>
<div style="left:163px;top:405px;width:1px;height:300px;background:#bcbcbc"></div>
<div style="left:244px;top:405px;width:1px;height:300px;background:#bcbcbc"></div>
<div style="left:342px;top:405px;width:1px;height:300px;background:#bcbcbc"></div>
<div style="left:384px;top:405px;width:1px;height:300px;background:#bcbcbc"></div>
<div style="left:465px;top:405px;width:1px;height:300px;background:#bcbcbc"></div>
<div style="left:518px;top:425px;width:1px;height:280px;background:#bcbcbc"></div>
<div style="left:609px;top:425px;width:1px;height:280px;background:#bcbcbc"></div>
<div style="left:665px;top:405px;width:1px;height:300px;background:#bcbcbc"></div>
<div style="left:736px;top:425px;width:1px;height:280px;background:#bcbcbc"></div>
<div style="left:808px;top:425px;width:1px;height:280px;background:#bcbcbc"></div>
<div style="left:881px;top:405px;width:1px;height:300px;background:#bcbcbc"></div>
<div style="left:922px;top:425px;width:1px;height:280px;background:#bcbcbc"></div>
<div style="left:964px;top:425px;width:1px;height:280px;background:#bcbcbc"></div>
<div style="left:0px;top:444px;width:82px;height:27px;background:#0088ff;box-shadow:inset 0 0 0 1px #7fc3ff"></div>
<div style="left:0px;top:470px;width:82px;height:27px;background:#0088ff;box-shadow:inset 0 0 0 1px #7fc3ff"></div>
<div style="left:0px;top:496px;width:82px;height:27px;background:#0088ff;box-shadow:inset 0 0 0 1px #7fc3ff"></div>
<div style="left:0px;top:522px;width:82px;height:27px;background:#0088ff;box-shadow:inset 0 0 0 1px #7fc3ff"></div>
<div style="left:0px;top:548px;width:82px;height:27px;background:#0088ff;box-shadow:inset 0 0 0 1px #7fc3ff"></div>
<div style="left:0px;top:574px;width:82px;height:27px;background:#0088ff;box-shadow:inset 0 0 0 1px #7fc3ff"></div>
<div style="left:0px;top:600px;width:82px;height:27px;background:#0088ff;box-shadow:inset 0 0 0 1px #7fc3ff"></div>
<div style="left:0px;top:626px;width:82px;height:27px;background:#0088ff;box-shadow:inset 0 0 0 1px #7fc3ff"></div>
<div style="left:0px;top:652px;width:82px;height:27px;background:#0088ff;box-shadow:inset 0 0 0 1px #7fc3ff"></div>
<div style="left:0px;top:678px;width:82px;height:27px;background:#0088ff;box-shadow:inset 0 0 0 1px #7fc3ff"></div>
<div class="tx" style="left:1px;top:406px;width:80px;height:38px;line-height:38px;text-align:center;color:#333">类型</div>
<div class="tx" style="left:82px;top:406px;width:81px;height:38px;line-height:38px;text-align:center;color:#333">日期</div>
<div class="tx" style="left:164px;top:406px;width:80px;height:38px;line-height:38px;text-align:center;color:#333">主场</div>
<div class="tx" style="left:245px;top:406px;width:97px;height:38px;line-height:38px;text-align:center;color:#333">比分(半场)</div>
<div class="tx" style="left:343px;top:406px;width:41px;height:38px;line-height:38px;text-align:center;color:#333">角球</div>
<div class="tx" style="left:385px;top:406px;width:80px;height:38px;line-height:38px;text-align:center;color:#333">客场</div>
<div class="tx" style="left:466px;top:427px;width:52px;height:18px;line-height:18px;text-align:center;color:#333">主</div>
<div class="tx" style="left:519px;top:427px;width:90px;height:18px;line-height:18px;text-align:center;color:#333">让球</div>
<div class="tx" style="left:610px;top:427px;width:55px;height:18px;line-height:18px;text-align:center;color:#333">客</div>
<div class="tx" style="left:666px;top:427px;width:70px;height:18px;line-height:18px;text-align:center;color:#333">主</div>
<div class="tx" style="left:737px;top:427px;width:71px;height:18px;line-height:18px;text-align:center;color:#333">和</div>
<div class="tx" style="left:809px;top:427px;width:72px;height:18px;line-height:18px;text-align:center;color:#333">客</div>
<div class="tx" style="left:882px;top:427px;width:40px;height:18px;line-height:18px;text-align:center;color:#333">胜负</div>
<div class="tx" style="left:923px;top:427px;width:41px;height:18px;line-height:18px;text-align:center;color:#333">让球</div>
<div class="tx" style="left:965px;top:427px;width:62px;height:18px;line-height:18px;text-align:center;color:#333">进球数</div>
<div class="sel" style="left:505px;top:406px;width:61px;height:19px"><span style="font-size:13.8px;left:3.5px">Crow*</span><svg width="12" height="8" viewBox="0 0 12 8" style="position:absolute;left:44px;top:4px"><path d="M1.6 1.6 L6 6 L10.4 1.6" fill="none" stroke="#000" stroke-width="2.1"/></svg></div>
<div class="sel" style="left:574px;top:406px;width:51px;height:19px"><span style="font-size:14px;left:3.5px">终指</span><svg width="12" height="8" viewBox="0 0 12 8" style="position:absolute;left:34px;top:4px"><path d="M1.6 1.6 L6 6 L10.4 1.6" fill="none" stroke="#000" stroke-width="2.1"/></svg></div>
<div class="sel" style="left:709px;top:406px;width:70px;height:19px"><span style="font-size:14px;left:3.5px">平均值</span><svg width="12" height="8" viewBox="0 0 12 8" style="position:absolute;left:53px;top:4px"><path d="M1.6 1.6 L6 6 L10.4 1.6" fill="none" stroke="#000" stroke-width="2.1"/></svg></div>
<div class="sel" style="left:786px;top:406px;width:51px;height:19px"><span style="font-size:14px;left:3.5px">终指</span><svg width="12" height="8" viewBox="0 0 12 8" style="position:absolute;left:34px;top:4px"><path d="M1.6 1.6 L6 6 L10.4 1.6" fill="none" stroke="#000" stroke-width="2.1"/></svg></div>
<div class="sel" style="left:929px;top:406px;width:51px;height:19px"><span style="font-size:14px;left:3.5px">全场</span><svg width="12" height="8" viewBox="0 0 12 8" style="position:absolute;left:34px;top:4px"><path d="M1.6 1.6 L6 6 L10.4 1.6" fill="none" stroke="#000" stroke-width="2.1"/></svg></div>
<div class="tx" style="left:1px;top:445px;width:80px;height:25px;line-height:25px;text-align:center;color:#fff;-webkit-text-stroke:0.2px #fff">意甲</div>
<div class="tx" style="left:82px;top:445px;width:81px;height:25px;line-height:25px;text-align:center;color:#2b2b2b"><span class="n">25-02-23</span></div>
<div class="tx" style="left:164px;top:445px;width:80px;height:25px;line-height:25px;text-align:center;color:#2b2b2b"><span style="color:#137a17">都灵</span></div>
<div class="tx" style="left:385px;top:445px;width:80px;height:25px;line-height:25px;text-align:center;color:#2b2b2b"><span class="n">AC</span>米兰</div>
<div class="tx" style="left:245px;top:445px;width:97px;height:25px;line-height:25px;text-align:center;color:#2b2b2b"><span style="color:#c8141e"><span class="n">2-1</span></span><span class="n">(1-0)</span></div>
<div class="tx" style="left:343px;top:445px;width:41px;height:25px;line-height:25px;text-align:center;color:#2b2b2b"><span class="n">4-11</span></div>
<div class="tx" style="left:466px;top:445px;width:52px;height:25px;line-height:25px;text-align:center;color:#2b2b2b"><span class="n">0.99</span></div>
<div class="tx" style="left:519px;top:445px;width:90px;height:25px;line-height:25px;text-align:center;color:#2b2b2b">受半球</div>
<div class="tx" style="left:610px;top:445px;width:55px;height:25px;line-height:25px;text-align:center;color:#2b2b2b"><span class="n">0.90</span></div>
<div class="tx" style="left:666px;top:445px;width:70px;height:25px;line-height:25px;text-align:center;color:#2b2b2b"><span class="n">3.96</span></div>
<div class="tx" style="left:737px;top:445px;width:71px;height:25px;line-height:25px;text-align:center;color:#2b2b2b"><span class="n">3.54</span></div>
<div class="tx" style="left:809px;top:445px;width:72px;height:25px;line-height:25px;text-align:center;color:#2b2b2b"><span class="n">1.93</span></div>
<div class="tx" style="left:882px;top:445px;width:40px;height:25px;line-height:25px;text-align:center;color:#c8141e">胜</div>
<div class="tx" style="left:923px;top:445px;width:41px;height:25px;line-height:25px;text-align:center;color:#c8141e">赢</div>
<div class="tx" style="left:965px;top:445px;width:62px;height:25px;line-height:25px;text-align:center;color:#c8141e">大</div>
<div class="tx" style="left:1px;top:471px;width:80px;height:25px;line-height:25px;text-align:center;color:#fff;-webkit-text-stroke:0.2px #fff">意甲</div>
<div class="tx" style="left:82px;top:471px;width:81px;height:25px;line-height:25px;text-align:center;color:#2b2b2b"><span class="n">25-02-15</span></div>
<div class="tx" style="left:164px;top:471px;width:80px;height:25px;line-height:25px;text-align:center;color:#2b2b2b">博洛尼亚</div>
<div class="tx" style="left:385px;top:471px;width:80px;height:25px;line-height:25px;text-align:center;color:#2b2b2b"><span style="color:#137a17">都灵</span></div>
<div class="tx" style="left:245px;top:471px;width:97px;height:25px;line-height:25px;text-align:center;color:#2b2b2b"><span style="color:#c8141e"><span class="n">3-2</span></span><span class="n">(1-1)</span></div>
<div class="tx" style="left:343px;top:471px;width:41px;height:25px;line-height:25px;text-align:center;color:#2b2b2b"><span class="n">8-2</span></div>
<div class="tx" style="left:466px;top:471px;width:52px;height:25px;line-height:25px;text-align:center;color:#2b2b2b"><span class="n">1.02</span></div>
<div class="tx" style="left:519px;top:471px;width:90px;height:25px;line-height:25px;text-align:center;color:#2b2b2b">半<span class="n">/</span>一</div>
<div class="tx" style="left:610px;top:471px;width:55px;height:25px;line-height:25px;text-align:center;color:#2b2b2b"><span class="n">0.87</span></div>
<div class="tx" style="left:666px;top:471px;width:70px;height:25px;line-height:25px;text-align:center;color:#2b2b2b"><span class="n">1.76</span></div>
<div class="tx" style="left:737px;top:471px;width:71px;height:25px;line-height:25px;text-align:center;color:#2b2b2b"><span class="n">3.35</span></div>
<div class="tx" style="left:809px;top:471px;width:72px;height:25px;line-height:25px;text-align:center;color:#2b2b2b"><span class="n">5.34</span></div>
<div class="tx" style="left:882px;top:471px;width:40px;height:25px;line-height:25px;text-align:center;color:#0c0cc0">负</div>
<div class="tx" style="left:923px;top:471px;width:41px;height:25px;line-height:25px;text-align:center;color:#0c0cc0">输</div>
<div class="tx" style="left:965px;top:471px;width:62px;height:25px;line-height:25px;text-align:center;color:#c8141e">大</div>
<div class="tx" style="left:1px;top:497px;width:80px;height:25px;line-height:25px;text-align:center;color:#fff;-webkit-text-stroke:0.2px #fff">意甲</div>
<div class="tx" style="left:82px;top:497px;width:81px;height:25px;line-height:25px;text-align:center;color:#2b2b2b"><span class="n">25-02-09</span></div>
<div class="tx" style="left:164px;top:497px;width:80px;height:25px;line-height:25px;text-align:center;color:#2b2b2b"><span style="color:#137a17">都灵</span></div>
<div class="tx" style="left:385px;top:497px;width:80px;height:25px;line-height:25px;text-align:center;color:#2b2b2b">热那亚</div>
<div class="tx" style="left:245px;top:497px;width:97px;height:25px;line-height:25px;text-align:center;color:#2b2b2b"><span style="color:#c8141e"><span class="n">1-1</span></span><span class="n">(1-0)</span></div>
<div class="tx" style="left:343px;top:497px;width:41px;height:25px;line-height:25px;text-align:center;color:#2b2b2b"><span class="n">4-2</span></div>
<div class="tx" style="left:466px;top:497px;width:52px;height:25px;line-height:25px;text-align:center;color:#2b2b2b"><span class="n">1.06</span></div>
<div class="tx" style="left:519px;top:497px;width:90px;height:25px;line-height:25px;text-align:center;color:#2b2b2b">平<span class="n">/</span>半</div>
<div class="tx" style="left:610px;top:497px;width:55px;height:25px;line-height:25px;text-align:center;color:#2b2b2b"><span class="n">0.83</span></div>
<div class="tx" style="left:666px;top:497px;width:70px;height:25px;line-height:25px;text-align:center;color:#2b2b2b"><span class="n">2.32</span></div>
<div class="tx" style="left:737px;top:497px;width:71px;height:25px;line-height:25px;text-align:center;color:#2b2b2b"><span class="n">2.90</span></div>
<div class="tx" style="left:809px;top:497px;width:72px;height:25px;line-height:25px;text-align:center;color:#2b2b2b"><span class="n">3.60</span></div>
<div class="tx" style="left:882px;top:497px;width:40px;height:25px;line-height:25px;text-align:center;color:#137a17">平</div>
<div class="tx" style="left:923px;top:497px;width:41px;height:25px;line-height:25px;text-align:center;color:#0c0cc0">输</div>
<div class="tx" style="left:965px;top:497px;width:62px;height:25px;line-height:25px;text-align:center;color:#137a17">走</div>
<div class="tx" style="left:1px;top:523px;width:80px;height:25px;line-height:25px;text-align:center;color:#fff;-webkit-text-stroke:0.2px #fff">意甲</div>
<div class="tx" style="left:82px;top:523px;width:81px;height:25px;line-height:25px;text-align:center;color:#2b2b2b"><span class="n">25-02-02</span></div>
<div class="tx" style="left:164px;top:523px;width:80px;height:25px;line-height:25px;text-align:center;color:#2b2b2b">亚特兰大</div>
<div class="tx" style="left:385px;top:523px;width:80px;height:25px;line-height:25px;text-align:center;color:#2b2b2b"><span style="color:#137a17">都灵</span></div>
<div class="tx" style="left:245px;top:523px;width:97px;height:25px;line-height:25px;text-align:center;color:#2b2b2b"><span style="color:#c8141e"><span class="n">1-1</span></span><span class="n">(1-1)</span></div>
<div class="tx" style="left:343px;top:523px;width:41px;height:25px;line-height:25px;text-align:center;color:#2b2b2b"><span class="n">8-0</span></div>
<div class="tx" style="left:466px;top:523px;width:52px;height:25px;line-height:25px;text-align:center;color:#2b2b2b"><span class="n">1.02</span></div>
<div class="tx" style="left:519px;top:523px;width:90px;height:25px;line-height:25px;text-align:center;color:#2b2b2b">一球</div>
<div class="tx" style="left:610px;top:523px;width:55px;height:25px;line-height:25px;text-align:center;color:#2b2b2b"><span class="n">0.87</span></div>
<div class="tx" style="left:666px;top:523px;width:70px;height:25px;line-height:25px;text-align:center;color:#2b2b2b"><span class="n">1.53</span></div>
<div class="tx" style="left:737px;top:523px;width:71px;height:25px;line-height:25px;text-align:center;color:#2b2b2b"><span class="n">4.11</span></div>
<div class="tx" style="left:809px;top:523px;width:72px;height:25px;line-height:25px;text-align:center;color:#2b2b2b"><span class="n">6.45</span></div>
<div class="tx" style="left:882px;top:523px;width:40px;height:25px;line-height:25px;text-align:center;color:#137a17">平</div>
<div class="tx" style="left:923px;top:523px;width:41px;height:25px;line-height:25px;text-align:center;color:#c8141e">赢</div>
<div class="tx" style="left:965px;top:523px;width:62px;height:25px;line-height:25px;text-align:center;color:#0c0cc0">小</div>
<div class="tx" style="left:1px;top:549px;width:80px;height:25px;line-height:25px;text-align:center;color:#fff;-webkit-text-stroke:0.2px #fff">意甲</div>
<div class="tx" style="left:82px;top:549px;width:81px;height:25px;line-height:25px;text-align:center;color:#2b2b2b"><span class="n">25-01-25</span></div>
<div class="tx" style="left:164px;top:549px;width:80px;height:25px;line-height:25px;text-align:center;color:#2b2b2b"><span style="color:#137a17">都灵</span></div>
<div class="tx" style="left:385px;top:549px;width:80px;height:25px;line-height:25px;text-align:center;color:#2b2b2b">卡利亚里</div>
<div class="tx" style="left:245px;top:549px;width:97px;height:25px;line-height:25px;text-align:center;color:#2b2b2b"><span style="color:#c8141e"><span class="n">2-0</span></span><span class="n">(1-0)</span></div>
<div class="tx" style="left:343px;top:549px;width:41px;height:25px;line-height:25px;text-align:center;color:#2b2b2b"><span class="n">6-3</span></div>
<div class="tx" style="left:466px;top:549px;width:52px;height:25px;line-height:25px;text-align:center;color:#2b2b2b"><span class="n">0.93</span></div>
<div class="tx" style="left:519px;top:549px;width:90px;height:25px;line-height:25px;text-align:center;color:#2b2b2b">平<span class="n">/</span>半</div>
<div class="tx" style="left:610px;top:549px;width:55px;height:25px;line-height:25px;text-align:center;color:#2b2b2b"><span class="n">0.96</span></div>
<div class="tx" style="left:666px;top:549px;width:70px;height:25px;line-height:25px;text-align:center;color:#2b2b2b"><span class="n">2.21</span></div>
<div class="tx" style="left:737px;top:549px;width:71px;height:25px;line-height:25px;text-align:center;color:#2b2b2b"><span class="n">3.09</span></div>
<div class="tx" style="left:809px;top:549px;width:72px;height:25px;line-height:25px;text-align:center;color:#2b2b2b"><span class="n">3.60</span></div>
<div class="tx" style="left:882px;top:549px;width:40px;height:25px;line-height:25px;text-align:center;color:#c8141e">胜</div>
<div class="tx" style="left:923px;top:549px;width:41px;height:25px;line-height:25px;text-align:center;color:#c8141e">赢</div>
<div class="tx" style="left:965px;top:549px;width:62px;height:25px;line-height:25px;text-align:center;color:#0c0cc0">小</div>
<div class="tx" style="left:1px;top:575px;width:80px;height:25px;line-height:25px;text-align:center;color:#fff;-webkit-text-stroke:0.2px #fff">意甲</div>
<div class="tx" style="left:82px;top:575px;width:81px;height:25px;line-height:25px;text-align:center;color:#2b2b2b"><span class="n">25-01-19</span></div>
<div class="tx" style="left:164px;top:575px;width:80px;height:25px;line-height:25px;text-align:center;color:#2b2b2b">佛罗伦萨</div>
<div class="tx" style="left:385px;top:575px;width:80px;height:25px;line-height:25px;text-align:center;color:#2b2b2b"><span style="color:#137a17">都灵</span><span class="bd"><span class="n">1</span></span></div>
<div class="tx" style="left:245px;top:575px;width:97px;height:25px;line-height:25px;text-align:center;color:#2b2b2b"><span style="color:#c8141e"><span class="n">1-1</span></span><span class="n">(1-0)</span></div>
<div class="tx" style="left:343px;top:575px;width:41px;height:25px;line-height:25px;text-align:center;color:#2b2b2b"><span class="n">9-2</span></div>
<div class="tx" style="left:466px;top:575px;width:52px;height:25px;line-height:25px;text-align:center;color:#2b2b2b"><span class="n">1.04</span></div>
<div class="tx" style="left:519px;top:575px;width:90px;height:25px;line-height:25px;text-align:center;color:#2b2b2b">半<span class="n">/</span>一</div>
<div class="tx" style="left:610px;top:575px;width:55px;height:25px;line-height:25px;text-align:center;color:#2b2b2b"><span class="n">0.85</span></div>
<div class="tx" style="left:666px;top:575px;width:70px;height:25px;line-height:25px;text-align:center;color:#2b2b2b"><span class="n">1.75</span></div>
<div class="tx" style="left:737px;top:575px;width:71px;height:25px;line-height:25px;text-align:center;color:#2b2b2b"><span class="n">3.51</span></div>
<div class="tx" style="left:809px;top:575px;width:72px;height:25px;line-height:25px;text-align:center;color:#2b2b2b"><span class="n">5.02</span></div>
<div class="tx" style="left:882px;top:575px;width:40px;height:25px;line-height:25px;text-align:center;color:#137a17">平</div>
<div class="tx" style="left:923px;top:575px;width:41px;height:25px;line-height:25px;text-align:center;color:#c8141e">赢</div>
<div class="tx" style="left:965px;top:575px;width:62px;height:25px;line-height:25px;text-align:center;color:#0c0cc0">小</div>
<div class="tx" style="left:1px;top:601px;width:80px;height:25px;line-height:25px;text-align:center;color:#fff;-webkit-text-stroke:0.2px #fff">意甲</div>
<div class="tx" style="left:82px;top:601px;width:81px;height:25px;line-height:25px;text-align:center;color:#2b2b2b"><span class="n">25-01-12</span></div>
<div class="tx" style="left:164px;top:601px;width:80px;height:25px;line-height:25px;text-align:center;color:#2b2b2b"><span style="color:#137a17">都灵</span></div>
<div class="tx" style="left:385px;top:601px;width:80px;height:25px;line-height:25px;text-align:center;color:#2b2b2b">尤文图斯</div>
<div class="tx" style="left:245px;top:601px;width:97px;height:25px;line-height:25px;text-align:center;color:#2b2b2b"><span style="color:#c8141e"><span class="n">1-1</span></span><span class="n">(1-1)</span></div>
<div class="tx" style="left:343px;top:601px;width:41px;height:25px;line-height:25px;text-align:center;color:#2b2b2b"><span class="n">9-1</span></div>
<div class="tx" style="left:466px;top:601px;width:52px;height:25px;line-height:25px;text-align:center;color:#2b2b2b"><span class="n">0.80</span></div>
<div class="tx" style="left:519px;top:601px;width:90px;height:25px;line-height:25px;text-align:center;color:#2b2b2b">受半球</div>
<div class="tx" style="left:610px;top:601px;width:55px;height:25px;line-height:25px;text-align:center;color:#2b2b2b"><span class="n">1.09</span></div>
<div class="tx" style="left:666px;top:601px;width:70px;height:25px;line-height:25px;text-align:center;color:#2b2b2b"><span class="n">4.49</span></div>
<div class="tx" style="left:737px;top:601px;width:71px;height:25px;line-height:25px;text-align:center;color:#2b2b2b"><span class="n">2.98</span></div>
<div class="tx" style="left:809px;top:601px;width:72px;height:25px;line-height:25px;text-align:center;color:#2b2b2b"><span class="n">2.02</span></div>
<div class="tx" style="left:882px;top:601px;width:40px;height:25px;line-height:25px;text-align:center;color:#137a17">平</div>
<div class="tx" style="left:923px;top:601px;width:41px;height:25px;line-height:25px;text-align:center;color:#c8141e">赢</div>
<div class="tx" style="left:965px;top:601px;width:62px;height:25px;line-height:25px;text-align:center;color:#c8141e">大</div>
<div class="tx" style="left:1px;top:627px;width:80px;height:25px;line-height:25px;text-align:center;color:#fff;-webkit-text-stroke:0.2px #fff">意甲</div>
<div class="tx" style="left:82px;top:627px;width:81px;height:25px;line-height:25px;text-align:center;color:#2b2b2b"><span class="n">25-01-06</span></div>
<div class="tx" style="left:164px;top:627px;width:80px;height:25px;line-height:25px;text-align:center;color:#2b2b2b"><span style="color:#137a17">都灵</span></div>
<div class="tx" style="left:385px;top:627px;width:80px;height:25px;line-height:25px;text-align:center;color:#2b2b2b">帕尔马</div>
<div class="tx" style="left:245px;top:627px;width:97px;height:25px;line-height:25px;text-align:center;color:#2b2b2b"><span style="color:#c8141e"><span class="n">0-0</span></span><span class="n">(0-0)</span></div>
<div class="tx" style="left:343px;top:627px;width:41px;height:25px;line-height:25px;text-align:center;color:#2b2b2b"><span class="n">8-7</span></div>
<div class="tx" style="left:466px;top:627px;width:52px;height:25px;line-height:25px;text-align:center;color:#2b2b2b"><span class="n">0.99</span></div>
<div class="tx" style="left:519px;top:627px;width:90px;height:25px;line-height:25px;text-align:center;color:#2b2b2b">半<span class="n">/</span>一</div>
<div class="tx" style="left:610px;top:627px;width:55px;height:25px;line-height:25px;text-align:center;color:#2b2b2b"><span class="n">0.90</span></div>
<div class="tx" style="left:666px;top:627px;width:70px;height:25px;line-height:25px;text-align:center;color:#2b2b2b"><span class="n">1.76</span></div>
<div class="tx" style="left:737px;top:627px;width:71px;height:25px;line-height:25px;text-align:center;color:#2b2b2b"><span class="n">3.56</span></div>
<div class="tx" style="left:809px;top:627px;width:72px;height:25px;line-height:25px;text-align:center;color:#2b2b2b"><span class="n">4.89</span></div>
<div class="tx" style="left:882px;top:627px;width:40px;height:25px;line-height:25px;text-align:center;color:#137a17">平</div>
<div class="tx" style="left:923px;top:627px;width:41px;height:25px;line-height:25px;text-align:center;color:#0c0cc0">输</div>
<div class="tx" style="left:965px;top:627px;width:62px;height:25px;line-height:25px;text-align:center;color:#0c0cc0">小</div>
<div class="tx" style="left:1px;top:653px;width:80px;height:25px;line-height:25px;text-align:center;color:#fff;-webkit-text-stroke:0.2px #fff">意甲</div>
<div class="tx" style="left:82px;top:653px;width:81px;height:25px;line-height:25px;text-align:center;color:#2b2b2b"><span class="n">24-12-29</span></div>
<div class="tx" style="left:164px;top:653px;width:80px;height:25px;line-height:25px;text-align:center;color:#2b2b2b">乌迪内斯</div>
<div class="tx" style="left:385px;top:653px;width:80px;height:25px;line-height:25px;text-align:center;color:#2b2b2b"><span style="color:#137a17">都灵</span></div>
<div class="tx" style="left:245px;top:653px;width:97px;height:25px;line-height:25px;text-align:center;color:#2b2b2b"><span style="color:#c8141e"><span class="n">2-2</span></span><span class="n">(1-0)</span></div>
<div class="tx" style="left:343px;top:653px;width:41px;height:25px;line-height:25px;text-align:center;color:#2b2b2b"><span class="n">4-3</span></div>
<div class="tx" style="left:466px;top:653px;width:52px;height:25px;line-height:25px;text-align:center;color:#2b2b2b"><span class="n">0.90</span></div>
<div class="tx" style="left:519px;top:653px;width:90px;height:25px;line-height:25px;text-align:center;color:#2b2b2b">平<span class="n">/</span>半</div>
<div class="tx" style="left:610px;top:653px;width:55px;height:25px;line-height:25px;text-align:center;color:#2b2b2b"><span class="n">0.99</span></div>
<div class="tx" style="left:666px;top:653px;width:70px;height:25px;line-height:25px;text-align:center;color:#2b2b2b"><span class="n">2.30</span></div>
<div class="tx" style="left:737px;top:653px;width:71px;height:25px;line-height:25px;text-align:center;color:#2b2b2b"><span class="n">2.94</span></div>
<div class="tx" style="left:809px;top:653px;width:72px;height:25px;line-height:25px;text-align:center;color:#2b2b2b"><span class="n">3.56</span></div>
<div class="tx" style="left:882px;top:653px;width:40px;height:25px;line-height:25px;text-align:center;color:#137a17">平</div>
<div class="tx" style="left:923px;top:653px;width:41px;height:25px;line-height:25px;text-align:center;color:#c8141e">赢</div>
<div class="tx" style="left:965px;top:653px;width:62px;height:25px;line-height:25px;text-align:center;color:#c8141e">大</div>
<div class="tx" style="left:1px;top:679px;width:80px;height:25px;line-height:25px;text-align:center;color:#fff;-webkit-text-stroke:0.2px #fff">意甲</div>
<div class="tx" style="left:82px;top:679px;width:81px;height:25px;line-height:25px;text-align:center;color:#2b2b2b"><span class="n">24-12-21</span></div>
<div class="tx" style="left:164px;top:679px;width:80px;height:25px;line-height:25px;text-align:center;color:#2b2b2b"><span style="color:#137a17">都灵</span></div>
<div class="tx" style="left:385px;top:679px;width:80px;height:25px;line-height:25px;text-align:center;color:#2b2b2b">博洛尼亚</div>
<div class="tx" style="left:245px;top:679px;width:97px;height:25px;line-height:25px;text-align:center;color:#2b2b2b"><span style="color:#c8141e"><span class="n">0-2</span></span><span class="n">(0-0)</span></div>
<div class="tx" style="left:343px;top:679px;width:41px;height:25px;line-height:25px;text-align:center;color:#2b2b2b"><span class="n">4-0</span></div>
<div class="tx" style="left:466px;top:679px;width:52px;height:25px;line-height:25px;text-align:center;color:#2b2b2b"><span class="n">0.85</span></div>
<div class="tx" style="left:519px;top:679px;width:90px;height:25px;line-height:25px;text-align:center;color:#2b2b2b">受平<span class="n">/</span>半</div>
<div class="tx" style="left:610px;top:679px;width:55px;height:25px;line-height:25px;text-align:center;color:#2b2b2b"><span class="n">1.04</span></div>
<div class="tx" style="left:666px;top:679px;width:70px;height:25px;line-height:25px;text-align:center;color:#2b2b2b"><span class="n">3.52</span></div>
<div class="tx" style="left:737px;top:679px;width:71px;height:25px;line-height:25px;text-align:center;color:#2b2b2b"><span class="n">2.89</span></div>
<div class="tx" style="left:809px;top:679px;width:72px;height:25px;line-height:25px;text-align:center;color:#2b2b2b"><span class="n">2.36</span></div>
<div class="tx" style="left:882px;top:679px;width:40px;height:25px;line-height:25px;text-align:center;color:#0c0cc0">负</div>
<div class="tx" style="left:923px;top:679px;width:41px;height:25px;line-height:25px;text-align:center;color:#0c0cc0">输</div>
<div class="tx" style="left:965px;top:679px;width:62px;height:25px;line-height:25px;text-align:center;color:#137a17">走</div>
<div class="tx" style="left:0px;top:705px;width:1027px;height:25px;line-height:25px;text-align:center;color:#333;letter-spacing:0.2px">近<span style="color:#c8141e"><span class="n">10</span></span>场<span class="n">,</span>胜<span class="n">2</span>平<span class="n">6</span>负<span class="n">2,</span> 胜率<span class="n">:</span><span style="color:#c8141e"><span class="n">20%</span></span> 让胜率<span class="n">:</span><span style="color:#c8141e"><span class="n">60%</span></span> 大率<span class="n">:</span><span style="color:#c8141e"><span class="n">40%</span></span> 单率<span class="n">:</span><span style="color:#c8141e"><span class="n">20%</span></span></div>
</body></html>
